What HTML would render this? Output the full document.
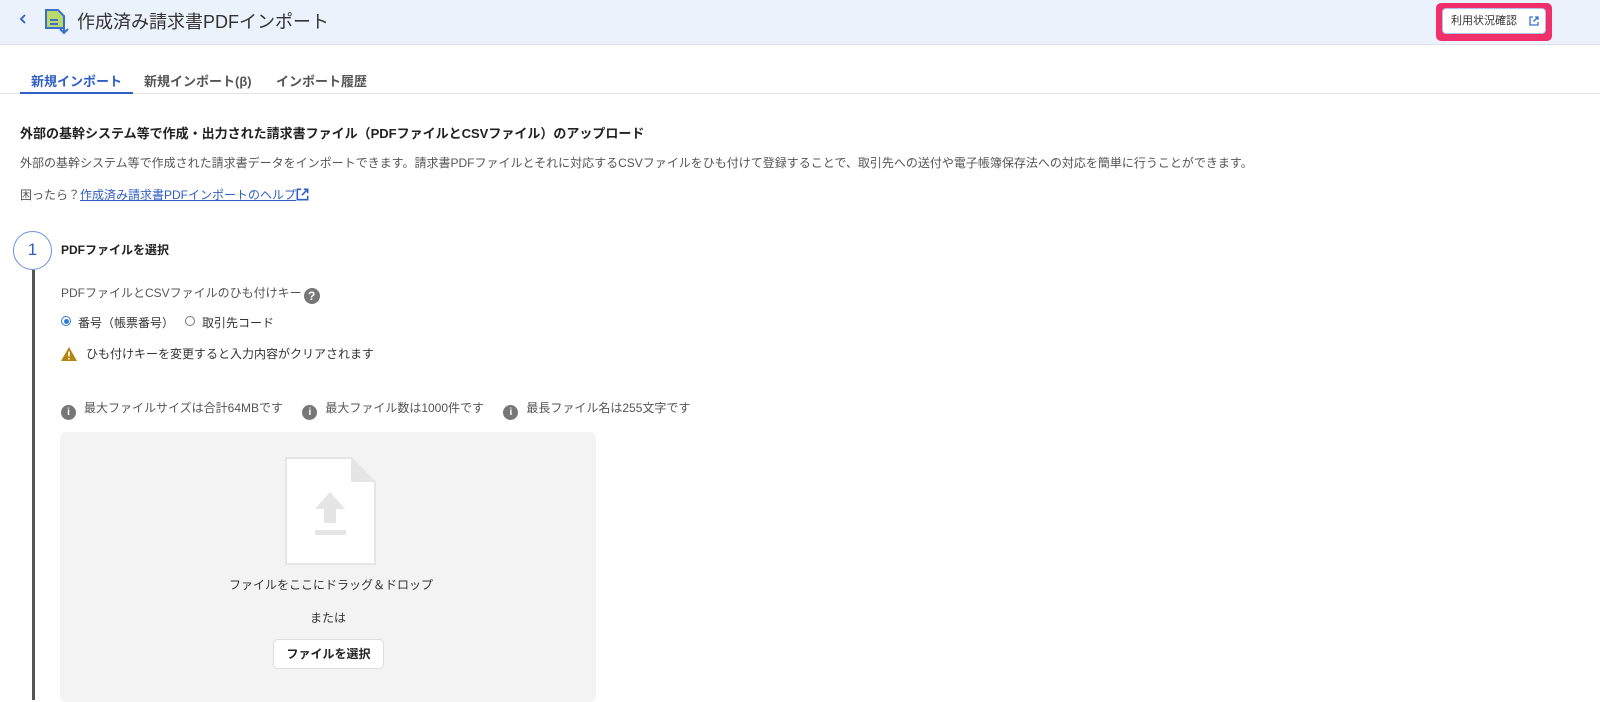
<!DOCTYPE html>
<html><head><meta charset="utf-8"><style>
*{margin:0;padding:0;box-sizing:border-box}
body{width:1600px;height:692px;overflow:hidden;background:#fff;font-family:"Liberation Sans","Noto Sans CJK JP",sans-serif;color:#333;position:relative}
.a{position:absolute;white-space:nowrap}
</style></head><body>
<div class="a" style="left:0;top:0;width:1600px;height:45px;background:#ebf2fc;border-bottom:1px solid #dde2ea"></div>
<svg class="a" style="left:19px;top:13px" width="8" height="12" viewBox="0 0 8 12"><path d="M6 2 L2 6 L6 10" stroke="#2f5fc4" stroke-width="1.8" fill="none"/></svg>
<svg class="a" style="left:44px;top:8px" width="26" height="28" viewBox="0 0 26 28">
<path d="M2 2h12l6 6v12H2z" fill="#b9d96a" stroke="#3a6fd0" stroke-width="2"/>
<path d="M6 12h8M6 16h8M6 20h5" stroke="#3a6fd0" stroke-width="2"/>
<path d="M20 16v9M16 21l4 4 4-4" stroke="#3a6fd0" stroke-width="2" fill="none"/></svg>
<div class="a" style="left:77px;top:8px;font-size:18px;color:#333">作成済み請求書PDFインポート</div>
<div class="a" style="left:1436px;top:3px;width:116px;height:38px;border:3px solid #f0306a;border-radius:5px;background:#f0306a"></div>
<div class="a" style="left:1442px;top:8px;width:104px;height:26px;background:#fff;border:1px solid #a9c2ee;border-radius:4px;font-size:11px;line-height:24px;padding-left:8px;color:#333">利用状況確認
<svg style="position:absolute;left:86px;top:7px" width="10" height="10" viewBox="0 0 10 10"><path d="M4 1H1v8h8V6M6 1h3v3M9 1L4.5 5.5" stroke="#3a6fd0" stroke-width="1.3" fill="none"/></svg></div>
<div class="a" style="left:0;top:93px;width:1600px;height:1px;background:#e4e4e4"></div>
<div class="a" style="left:31px;top:71px;font-size:13px;font-weight:bold;color:#2f5fc4">新規インポート</div>
<div class="a" style="left:20px;top:92px;width:113px;height:2px;background:#2f5fc4"></div>
<div class="a" style="left:144px;top:71px;font-size:13px;font-weight:bold;color:#555">新規インポート(β)</div>
<div class="a" style="left:276px;top:71px;font-size:13px;font-weight:bold;color:#555">インポート履歴</div>
<div class="a" style="left:20px;top:123px;font-size:13px;font-weight:bold;color:#222">外部の基幹システム等で作成・出力された請求書ファイル（PDFファイルとCSVファイル）のアップロード</div>
<div class="a" style="left:20px;top:154px;font-size:12px;color:#555">外部の基幹システム等で作成された請求書データをインポートできます。請求書PDFファイルとそれに対応するCSVファイルをひも付けて登録することで、取引先への送付や電子帳簿保存法への対応を簡単に行うことができます。</div>
<div class="a" style="left:20px;top:186px;font-size:12px;color:#555">困ったら？<span style="color:#2f5fc4;text-decoration:underline">作成済み請求書PDFインポートのヘルプ</span><svg width="13" height="13" viewBox="0 0 10 10" style="vertical-align:-2px"><path d="M4 1H1v8h8V6M6 1h3v3M9 1L4.5 5.5" stroke="#2f5fc4" stroke-width="1.2" fill="none"/></svg></div>
<div class="a" style="left:13px;top:231px;width:39px;height:39px;border:1.5px solid #6b8fe0;border-radius:50%;text-align:center;line-height:36px;font-size:17px;color:#2f5fc4;background:#fff">1</div>
<div class="a" style="left:32px;top:270px;width:3px;height:430px;background:#555"></div>
<div class="a" style="left:61px;top:241px;font-size:12px;font-weight:bold;color:#222">PDFファイルを選択</div>
<div class="a" style="left:61px;top:284px;font-size:12px;color:#555">PDFファイルとCSVファイルのひも付けキー<span style="display:inline-block;width:16px;height:16px;border-radius:50%;background:#777;color:#fff;font-weight:bold;font-size:12px;text-align:center;line-height:16px;margin-left:2px;vertical-align:-3px">?</span></div>
<div class="a" style="left:61px;top:316px;width:10px;height:10px;border:1px solid #2f7ad8;border-radius:50%"><div style="margin:1.5px;width:5px;height:5px;border-radius:50%;background:#2f7ad8"></div></div>
<div class="a" style="left:78px;top:314px;font-size:12px;color:#333">番号（帳票番号）</div>
<div class="a" style="left:185px;top:316px;width:10px;height:10px;border:1px solid #777;border-radius:50%"></div>
<div class="a" style="left:202px;top:314px;font-size:12px;color:#333">取引先コード</div>
<svg class="a" style="left:61px;top:347px" width="16" height="14" viewBox="0 0 16 14"><path d="M8 0L16 14H0z" fill="#b5860f"/><path d="M8 4.5v5M8 11v1.5" stroke="#fff" stroke-width="1.6"/></svg>
<div class="a" style="left:86px;top:345px;font-size:12px;color:#333">ひも付けキーを変更すると入力内容がクリアされます</div>
<div class="a" style="left:61px;top:399px;font-size:12px;color:#555">
<span style="display:inline-block;width:15px;height:15px;border-radius:50%;background:#777;color:#fff;font-weight:bold;font-size:10px;text-align:center;line-height:15px;vertical-align:-3px;margin-right:8px">i</span>最大ファイルサイズは合計64MBです
<span style="display:inline-block;width:15px;height:15px;border-radius:50%;background:#777;color:#fff;font-weight:bold;font-size:10px;text-align:center;line-height:15px;vertical-align:-3px;margin:0 8px 0 16px">i</span>最大ファイル数は1000件です
<span style="display:inline-block;width:15px;height:15px;border-radius:50%;background:#777;color:#fff;font-weight:bold;font-size:10px;text-align:center;line-height:15px;vertical-align:-3px;margin:0 8px 0 16px">i</span>最長ファイル名は255文字です</div>
<div class="a" style="left:60px;top:432px;width:536px;height:270px;background:#f4f3f3;border-radius:6px"></div>
<svg class="a" style="left:285px;top:457px" width="91" height="108" viewBox="0 0 91 108"><path d="M1 1h65l24 24v82H1z" fill="#fff" stroke="#e6e5e5" stroke-width="2"/><path d="M66 1v24h24z" fill="#e6e5e5"/><path d="M45 35L30 52h9v14h12V52h9z" fill="#e6e5e5"/><rect x="30" y="73" width="31" height="5" fill="#e6e5e5"/></svg>
<div class="a" style="left:229px;top:576px;font-size:12px;color:#333">ファイルをここにドラッグ＆ドロップ</div>
<div class="a" style="left:310px;top:609px;font-size:12px;color:#333">または</div>
<div class="a" style="left:273px;top:639px;width:111px;height:30px;background:#fff;border:1px solid #ddd;border-radius:5px;font-size:12px;font-weight:bold;line-height:28px;text-align:center;color:#222">ファイルを選択</div>
</body></html>
